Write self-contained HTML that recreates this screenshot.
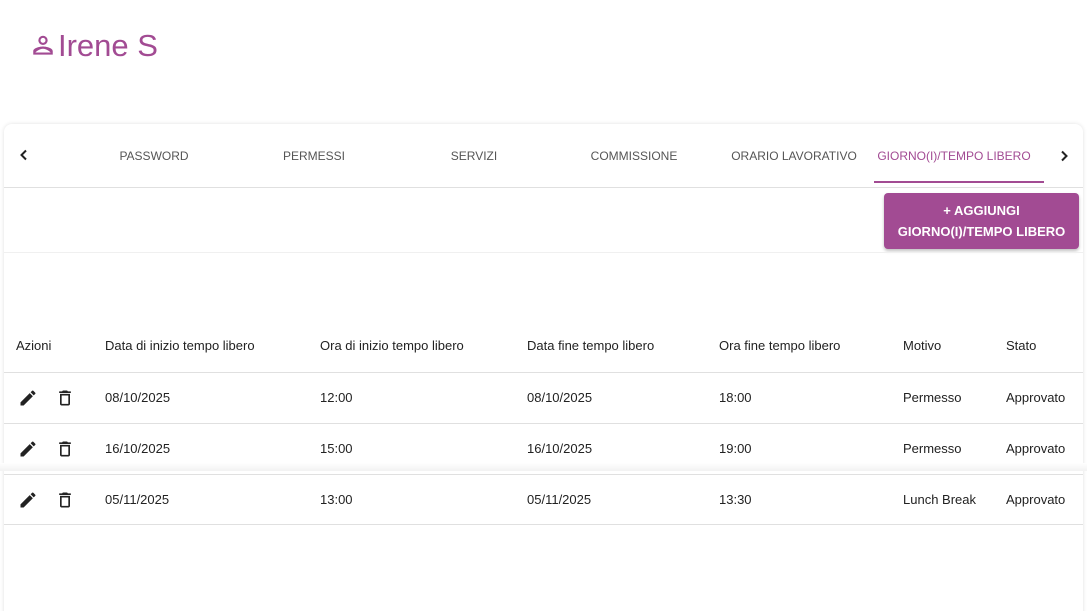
<!DOCTYPE html>
<html><head><meta charset="utf-8"><style>
html,body{margin:0;width:1087px;height:611px;overflow:hidden}
body{background:#fff;font-family:"Liberation Sans",sans-serif;position:relative;color:#222}
.abs{position:absolute}
.title{left:30px;top:28px;color:#a24b93;font-size:31px;display:flex;align-items:center}
.card{left:4px;top:124px;width:1079px;height:500px;border-radius:8px;box-shadow:0 0 4px rgba(0,0,0,.12);background:#fff}
.tab{top:149px;font-size:12px;color:#555;text-align:center;width:160px}
.th{top:338px;font-size:13px;color:#222}
.td{font-size:13px;color:#222}
.line{left:4px;width:1079px;height:1px;background:#e0e0e0}
</style></head><body>
<div class="abs title"><svg width="26" height="26" viewBox="0 0 24 24" style="margin-right:2px"><path fill="#a24b93" d="M12 4.5a2.3 2.3 0 1 1 0 4.6 2.3 2.3 0 0 1 0-4.6m0-2a4.3 4.3 0 1 0 0 8.6 4.3 4.3 0 0 0 0-8.6zm0 10c-3 0-9 1.4-9 4.3V20h18v-3.2c0-2.9-6-4.3-9-4.3zm-7 5.5c.3-.8 3.9-3.5 7-3.5s6.7 2.7 7 3.5H5z"/></svg>Irene S</div>
<div class="abs card"></div>
<svg class="abs" style="left:17px;top:148px" width="14" height="14" viewBox="0 0 14 14"><path d="M9 2.5 4.5 7 9 11.5" fill="none" stroke="#222" stroke-width="2"/></svg>
<svg class="abs" style="left:1057px;top:149px" width="14" height="14" viewBox="0 0 14 14"><path d="M5 2.5 9.5 7 5 11.5" fill="none" stroke="#222" stroke-width="2"/></svg>
<div class="abs tab" style="left:74px">PASSWORD</div>
<div class="abs tab" style="left:234px">PERMESSI</div>
<div class="abs tab" style="left:394px">SERVIZI</div>
<div class="abs tab" style="left:554px">COMMISSIONE</div>
<div class="abs tab" style="left:714px">ORARIO LAVORATIVO</div>
<div class="abs tab" style="left:874px;color:#a24b93">GIORNO(I)/TEMPO LIBERO</div>
<div class="abs" style="left:874px;top:181px;width:170px;height:2px;background:#a24b93"></div>
<div class="abs line" style="top:187px"></div>
<div class="abs" style="left:884px;top:193px;width:195px;height:56px;background:#a24b93;border-radius:4px;box-shadow:0 2px 3px rgba(0,0,0,.25);color:#fff;font-size:13px;font-weight:bold;text-align:center;line-height:21px;padding-top:7px;box-sizing:border-box">+ AGGIUNGI<br>GIORNO(I)/TEMPO LIBERO</div>
<div class="abs line" style="top:252px;background:#f0f0f0"></div>
<div class="abs th" style="left:16px">Azioni</div>
<div class="abs th" style="left:105px">Data di inizio tempo libero</div>
<div class="abs th" style="left:320px">Ora di inizio tempo libero</div>
<div class="abs th" style="left:527px">Data fine tempo libero</div>
<div class="abs th" style="left:719px">Ora fine tempo libero</div>
<div class="abs th" style="left:903px">Motivo</div>
<div class="abs th" style="left:1006px">Stato</div>
<div class="abs line" style="top:372px"></div>
<div class="abs line" style="top:423px"></div>
<div class="abs" style="left:0;top:463px;width:1087px;height:8px;background:linear-gradient(#fff,#f2f2f2)"></div>
<div class="abs line" style="top:474px"></div>
<div class="abs line" style="top:524px"></div>
<div id="rows"></div>
<script>
var r=[["08/10/2025","12:00","08/10/2025","18:00","Permesso"],["16/10/2025","15:00","16/10/2025","19:00","Permesso"],["05/11/2025","13:00","05/11/2025","13:30","Lunch Break"]];
var xs=[105,320,527,719,903],h="";
r.forEach(function(a,i){var y=390+i*51;
h+='<svg class="abs" style="left:18px;top:'+(y-2)+'px" width="20" height="20" viewBox="0 0 24 24"><path fill="#222" d="M3 17.25V21h3.75L17.81 9.94l-3.75-3.75L3 17.25zM20.71 5.63l-2.34-2.34a1 1 0 0 0-1.41 0l-1.83 1.83 3.75 3.75 1.83-1.83a1 1 0 0 0 0-1.41z"/></svg>';
h+='<svg class="abs" style="left:55px;top:'+(y-2)+'px" width="20" height="20" viewBox="0 0 24 24"><path fill="#222" d="M16 9v10H8V9h8m-1.5-6h-5l-1 1H5v2h14V4h-3.5l-1-1zM18 7H6v12c0 1.1.9 2 2 2h8c1.1 0 2-.9 2-2V7z"/></svg>';
a.forEach(function(t,j){h+='<div class="abs td" style="left:'+xs[j]+'px;top:'+y+'px">'+t+'</div>'});
h+='<div class="abs td" style="left:1006px;top:'+y+'px">Approvato</div>';});
document.getElementById('rows').innerHTML=h;
</script>
</body></html>
